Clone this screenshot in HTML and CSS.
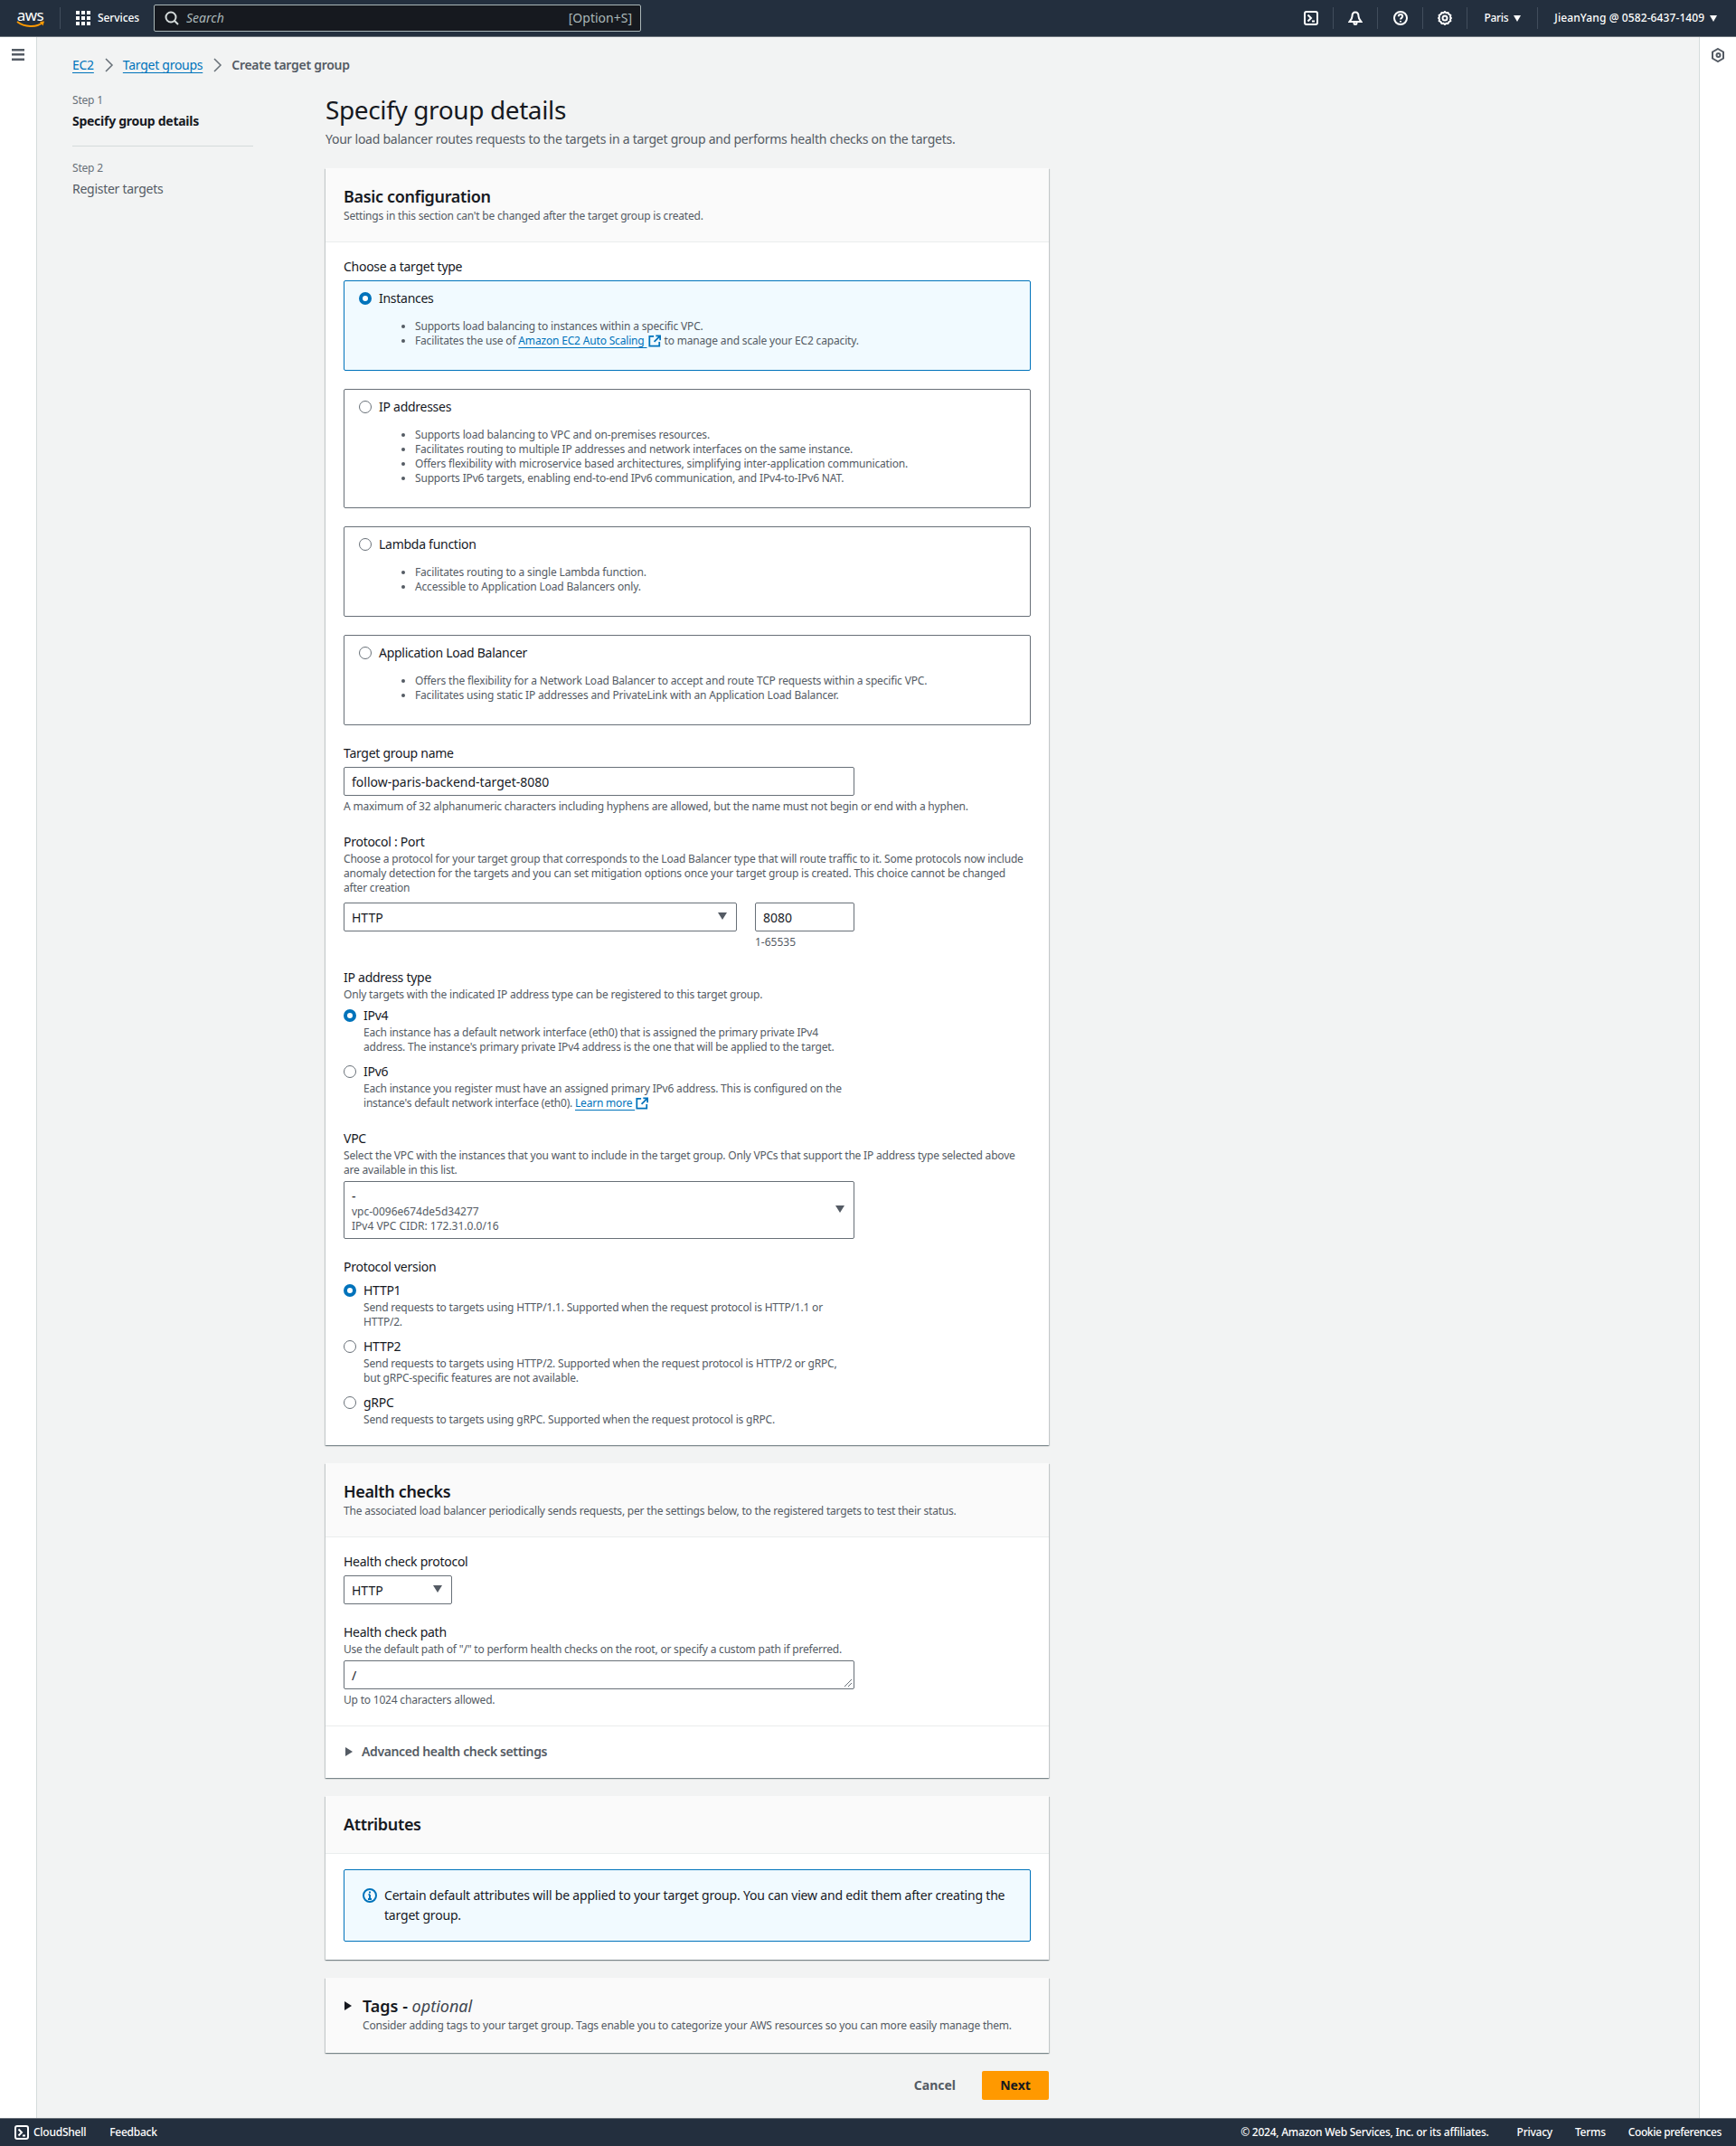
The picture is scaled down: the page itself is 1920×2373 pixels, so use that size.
FILE: index.html
```html
<!DOCTYPE html>
<html>
  <head>
    <meta charset="UTF-8" />
    <title>Create target group | EC2</title>
    <link rel="stylesheet" href="styles.css">
  </head>
  <body>
    <header class="topbar">
      <div class="logo">
        <span class="logo-text">aws</span>
        <svg class="logo-smile" width="32" height="8" viewBox="0 0 32 8"><path d="M1 1c8 6 21 7 28 1" fill="none" stroke="#f90" stroke-width="2"/><path d="M26 1l5-.5-1.500 5z" fill="#f90"/></svg>
      </div>
      <span class="divider logo-divider"></span>
      <svg class="grid-icon" width="16" height="16" viewBox="0 0 16 16" fill="#fff"><rect x="0" y="0" width="4" height="4"/><rect x="6" y="0" width="4" height="4"/><rect x="12" y="0" width="4" height="4"/><rect x="0" y="6" width="4" height="4"/><rect x="6" y="6" width="4" height="4"/><rect x="12" y="6" width="4" height="4"/><rect x="0" y="12" width="4" height="4"/><rect x="6" y="12" width="4" height="4"/><rect x="12" y="12" width="4" height="4"/></svg>
      <span class="services">Services</span>
      <div class="search">
        <svg width="16" height="16" viewBox="0 0 16 16" fill="none" stroke="#d5dbdb" stroke-width="2"><circle cx="7" cy="7" r="5.500"/><path d="M11 11l4 4"/></svg>
        <span class="search-text">Search</span>
        <span class="search-key">[Option+S]</span>
      </div>
      <div class="top-right">
        <svg class="top-icon" width="16" height="16" viewBox="0 0 16 16" fill="none" stroke="#fff" stroke-width="2"><rect x="1" y="1" width="14" height="14" rx="2"/><path d="M4.500 4.500L8 8l-3.500 3.500M9 11.500h3"/></svg>
        <span class="divider"></span>
        <svg class="top-icon" width="16" height="16" viewBox="0 0 16 16" fill="none" stroke="#fff" stroke-width="2"><path d="M8 1.500c-2.500 0-3.500 2-3.500 4.500 0 2.500-1.500 4-3 6h13c-1.500-2-3-3.500-3-6 0-2.500-1-4.500-3.500-4.500z"/><circle cx="8" cy="13.500" r="1.500"/></svg>
        <span class="divider"></span>
        <svg class="top-icon" width="16" height="16" viewBox="0 0 16 16" fill="none" stroke="#fff" stroke-width="2"><circle cx="8" cy="8" r="7"/><path d="M5.800 6.200C5.800 4.900 6.800 4 8 4s2.200.9 2.200 2.100c0 1.700-2.200 1.800-2.200 3.400"/><path d="M8 11v1.500"/></svg>
        <span class="divider"></span>
        <svg class="top-icon" width="16" height="16" viewBox="0 0 16 16" fill="none" stroke="#fff" stroke-width="2"><path d="M8 1l1.500 1.300 2-.3 1 1.800 1.800 1-.3 2L15 8l-1 1.200.3 2-1.800 1-1 1.800-2-.3L8 15l-1.500-1.300-2 .3-1-1.800-1.800-1 .3-2L1 8l1-1.200-.3-2 1.800-1 1-1.800 2 .3z"/><circle cx="8" cy="8" r="2.500"/></svg>
        <span class="divider"></span>
        <span class="menu menu-region">Paris<i class="caret white"></i></span>
        <span class="divider"></span>
        <span class="menu">JieanYang @ 0582-6437-1409<i class="caret white"></i></span>
      </div>
    </header>

    <div class="page">
      <aside class="rail rail-left">
        <svg width="14" height="13" viewBox="0 0 14 13" fill="#545b64"><rect width="14" height="2.500"/><rect y="5" width="14" height="2.500"/><rect y="10.500" width="14" height="2.500"/></svg>
      </aside>

      <main class="content">
        <nav class="breadcrumb">
          <a class="link">EC2</a>
          <svg class="crumb-sep" width="16" height="16" viewBox="0 0 16 16" fill="none" stroke="#687078" stroke-width="1.500"><path d="M5 1l7 7-7 7"/></svg>
          <a class="link">Target groups</a>
          <svg class="crumb-sep" width="16" height="16" viewBox="0 0 16 16" fill="none" stroke="#687078" stroke-width="1.500"><path d="M5 1l7 7-7 7"/></svg>
          <span class="crumb-current">Create target group</span>
        </nav>

        <div class="wizard">
          <ul class="steps">
            <li class="step step-active">
              <small>Step 1</small>
              <span>Specify group details</span>
            </li>
            <li class="step">
              <small>Step 2</small>
              <span>Register targets</span>
            </li>
          </ul>

          <div class="form-col">
            <h1>Specify group details</h1>
            <p class="lead">Your load balancer routes requests to the targets in a target group and performs health checks on the targets.</p>

            <section class="card">
              <div class="card-head">
                <h2>Basic configuration</h2>
                <p class="hint">Settings in this section can't be changed after the target group is created.</p>
              </div>
              <div class="card-body">
                <div class="label label-boxes">Choose a target type</div>

                <div class="choice choice-on">
                  <div class="choice-title"><span class="radio radio-on"></span>Instances</div>
                  <ul class="bullets">
                    <li>Supports load balancing to instances within a specific VPC.</li>
                    <li>Facilitates the use of <a class="link">Amazon EC2 Auto Scaling&nbsp;</a><svg class="ext" width="14" height="14" viewBox="0 0 16 16" fill="none" stroke="#0073bb" stroke-width="2"><path d="M7 2H1.500v12.500H14V9"/><path d="M9.500 1.500H15V7M15 1.500L7.500 9"/></svg> to manage and scale your EC2 capacity.</li>
                  </ul>
                </div>

                <div class="choice">
                  <div class="choice-title"><span class="radio"></span>IP addresses</div>
                  <ul class="bullets">
                    <li>Supports load balancing to VPC and on-premises resources.</li>
                    <li>Facilitates routing to multiple IP addresses and network interfaces on the same instance.</li>
                    <li>Offers flexibility with microservice based architectures, simplifying inter-application communication.</li>
                    <li>Supports IPv6 targets, enabling end-to-end IPv6 communication, and IPv4-to-IPv6 NAT.</li>
                  </ul>
                </div>

                <div class="choice">
                  <div class="choice-title"><span class="radio"></span>Lambda function</div>
                  <ul class="bullets">
                    <li>Facilitates routing to a single Lambda function.</li>
                    <li>Accessible to Application Load Balancers only.</li>
                  </ul>
                </div>

                <div class="choice choice-last">
                  <div class="choice-title"><span class="radio"></span>Application Load Balancer</div>
                  <ul class="bullets">
                    <li>Offers the flexibility for a Network Load Balancer to accept and route TCP requests within a specific VPC.</li>
                    <li>Facilitates using static IP addresses and PrivateLink with an Application Load Balancer.</li>
                  </ul>
                </div>

                <div class="field">
                  <div class="label">Target group name</div>
                  <div class="input input-wide">follow-paris-backend-target-8080</div>
                  <p class="hint hint-below">A maximum of 32 alphanumeric characters including hyphens are allowed, but the name must not begin or end with a hyphen.</p>
                </div>

                <div class="field">
                  <div class="label">Protocol : Port</div>
                  <p class="hint desc-select">Choose a protocol for your target group that corresponds to the Load Balancer type that will route traffic to it. Some protocols now include<br>anomaly detection for the targets and you can set mitigation options once your target group is created. This choice cannot be changed<br>after creation</p>
                  <div class="port-row">
                    <div class="input select select-protocol">HTTP<i class="caret"></i></div>
                    <div class="port-col">
                      <div class="input">8080</div>
                      <p class="hint hint-below hint-plain">1-65535</p>
                    </div>
                  </div>
                </div>

                <div class="field">
                  <div class="label">IP address type</div>
                  <p class="hint desc-vpc">Only targets with the indicated IP address type can be registered to this target group.</p>
                  <div class="radio-group">
                    <div class="radio-item">
                      <span class="radio radio-on"></span>
                      <div>
                        <div class="radio-label">IPv4</div>
                        <p class="hint">Each instance has a default network interface (eth0) that is assigned the primary private IPv4<br>address. The instance's primary private IPv4 address is the one that will be applied to the target.</p>
                      </div>
                    </div>
                    <div class="radio-item">
                      <span class="radio"></span>
                      <div>
                        <div class="radio-label">IPv6</div>
                        <p class="hint">Each instance you register must have an assigned primary IPv6 address. This is configured on the<br>instance's default network interface (eth0). <a class="link">Learn more&nbsp;</a><svg class="ext" width="14" height="14" viewBox="0 0 16 16" fill="none" stroke="#0073bb" stroke-width="2"><path d="M7 2H1.500v12.500H14V9"/><path d="M9.500 1.500H15V7M15 1.500L7.500 9"/></svg></p>
                      </div>
                    </div>
                  </div>
                </div>

                <div class="field">
                  <div class="label">VPC</div>
                  <p class="hint desc-vpc">Select the VPC with the instances that you want to include in the target group. Only VPCs that support the IP address type selected above<br>are available in this list.</p>
                  <div class="input select input-wide vpc-select">
                    <div>
                      <div class="vpc-name">-</div>
                      <div class="hint hint-plain">vpc-0096e674de5d34277</div>
                      <div class="hint hint-plain">IPv4 VPC CIDR: 172.31.0.0/16</div>
                    </div>
                    <i class="caret"></i>
                  </div>
                </div>

                <div class="field">
                  <div class="label">Protocol version</div>
                  <div class="radio-group radio-group-tight">
                    <div class="radio-item">
                      <span class="radio radio-on"></span>
                      <div>
                        <div class="radio-label">HTTP1</div>
                        <p class="hint">Send requests to targets using HTTP/1.1. Supported when the request protocol is HTTP/1.1 or<br>HTTP/2.</p>
                      </div>
                    </div>
                    <div class="radio-item">
                      <span class="radio"></span>
                      <div>
                        <div class="radio-label">HTTP2</div>
                        <p class="hint">Send requests to targets using HTTP/2. Supported when the request protocol is HTTP/2 or gRPC,<br>but gRPC-specific features are not available.</p>
                      </div>
                    </div>
                    <div class="radio-item">
                      <span class="radio"></span>
                      <div>
                        <div class="radio-label">gRPC</div>
                        <p class="hint">Send requests to targets using gRPC. Supported when the request protocol is gRPC.</p>
                      </div>
                    </div>
                  </div>
                </div>
              </div>
            </section>

            <section class="card">
              <div class="card-head">
                <h2>Health checks</h2>
                <p class="hint">The associated load balancer periodically sends requests, per the settings below, to the registered targets to test their status.</p>
              </div>
              <div class="card-body">
                <div class="label label-boxes">Health check protocol</div>
                <div class="input select select-small">HTTP<i class="caret"></i></div>
                <div class="field">
                  <div class="label">Health check path</div>
                  <p class="hint desc-vpc">Use the default path of "/" to perform health checks on the root, or specify a custom path if preferred.</p>
                  <div class="input input-wide textarea">/
                    <svg class="grip" width="10" height="10" viewBox="0 0 10 10" stroke="#687078" fill="none"><path d="M1 9l8-8M5 9l4-4"/></svg>
                  </div>
                  <p class="hint hint-below">Up to 1024 characters allowed.</p>
                </div>
              </div>
              <div class="expander">
                <i class="tri"></i>Advanced health check settings
              </div>
            </section>

            <section class="card">
              <div class="card-head attr-head">
                <h2>Attributes</h2>
              </div>
              <div class="card-body">
                <div class="info">
                  <svg width="16" height="16" viewBox="0 0 16 16" fill="none" stroke="#0073bb" stroke-width="2"><circle cx="8" cy="8" r="7"/><path d="M8 7v5M6 12h4M6.500 7H8M8 3.500v2"/></svg>
                  <p>Certain default attributes will be applied to your target group. You can view and edit them after creating the<br>target group.</p>
                </div>
              </div>
            </section>

            <section class="card">
              <div class="card-head tags-head">
                <i class="tri tri-dark"></i>
                <div>
                  <h2>Tags - <em>optional</em></h2>
                  <p class="hint">Consider adding tags to your target group. Tags enable you to categorize your AWS resources so you can more easily manage them.</p>
                </div>
              </div>
            </section>

            <div class="actions">
              <span class="btn-link">Cancel</span>
              <span class="btn-primary">Next</span>
            </div>
          </div>
        </div>
      </main>

      <aside class="rail rail-right">
        <svg width="14" height="16" viewBox="0 0 14 16" fill="none" stroke="#545b64" stroke-width="2"><path d="M7 1l6 3.500v7L7 15l-6-3.500v-7z"/><circle cx="7.500" cy="8" r="2"/></svg>
      </aside>
    </div>

    <footer class="footer">
      <svg class="top-icon" width="16" height="16" viewBox="0 0 16 16" fill="none" stroke="#fff" stroke-width="2"><rect x="1" y="1" width="14" height="14" rx="2"/><path d="M4.500 4.500L8 8l-3.500 3.500M9 11.500h3"/></svg>
      <span class="foot-shell">CloudShell</span>
      <span class="foot-feedback">Feedback</span>
      <div class="foot-right">
        <span class="foot-copy">© 2024, Amazon Web Services, Inc. or its affiliates.</span>
        <span>Privacy</span>
        <span>Terms</span>
        <span class="foot-cookie">Cookie preferences</span>
      </div>
    </footer>
  </body>
</html>
```

FILE: styles.css
```css
* {
  box-sizing: border-box;
  margin: 0;
  padding: 0;
}

body {
  font-family: "Noto Sans", Arial, sans-serif;
  font-size: 14px;
  line-height: 20px;
  letter-spacing: -0.27px;
  color: #16191f;
  background-color: #f2f3f3;
}

ul {
  list-style: none;
}

/* top bar */
.topbar {
  height: 41px;
  display: flex;
  align-items: center;
  padding-left: 18px;
  background-color: #232f3e;
  border-bottom: 1px solid #687078;
  color: #fff;
}

.logo {
  width: 31px;
  display: flex;
  flex-direction: column;
  align-items: center;
}

.logo-text {
  font-size: 17px;
  line-height: 13px;
  letter-spacing: -0.5px;
}

.logo-smile {
  display: block;
}

.divider {
  width: 1px;
  height: 24px;
  background-color: #414d5c;
}

.logo-divider {
  margin: 0 17px;
}

.services {
  width: 45px;
  margin-left: 8px;
  font-size: 12px;
  font-weight: 500;
  letter-spacing: -0.1px;
  white-space: nowrap;
}

.search {
  width: 539px;
  height: 30px;
  margin-left: 17px;
  padding: 0 9px 0 11px;
  display: flex;
  align-items: center;
  background-color: #16191f;
  border: 1px solid #aab7b8;
  border-radius: 2px;
  color: #aab7b8;
  letter-spacing: 0;
}

.search-text {
  margin-left: 8px;
  font-style: italic;
}

.search-key {
  margin-left: auto;
}

.top-right {
  margin-left: auto;
  padding-right: 19px;
  display: flex;
  align-items: center;
  gap: 16.25px;
}

.menu {
  margin: 0 1.75px;
  font-size: 12px;
  font-weight: 500;
  letter-spacing: 0.1px;
  display: flex;
  align-items: center;
}

.menu-region {
  letter-spacing: -0.3px;
}

.caret {
  display: block;
  width: 0;
  height: 0;
  margin-left: 6px;
  border-left: 4.5px solid transparent;
  border-right: 4.5px solid transparent;
  border-top: 7px solid #545b64;
}

.caret.white {
  border-top-color: #fff;
}

/* page frame */
.page {
  display: flex;
  height: 2301px;
}

.rail {
  width: 41px;
  flex: none;
  background-color: #fff;
  padding-top: 13px;
  display: flex;
  justify-content: center;
  align-items: flex-start;
}

.rail-left {
  border-right: 1px solid #d5dbdb;
}

.rail-right {
  border-left: 1px solid #d5dbdb;
  padding-top: 12px;
}

.content {
  flex: 1;
  padding: 21px 0 0 39px;
}

.breadcrumb {
  display: flex;
  align-items: center;
  height: 20px;
}

.link {
  color: #0073bb;
  text-decoration: underline;
  text-underline-offset: 3px;
}

.crumb-sep {
  margin: 0 8px;
}

.crumb-current {
  color: #545b64;
  font-weight: 600;
}

.wizard {
  display: grid;
  grid-template-columns: 200px 800px;
  column-gap: 80px;
  margin-top: 21px;
}

.step small {
  display: block;
  font-size: 12px;
  line-height: 16px;
  letter-spacing: -0.2px;
  color: #687078;
  margin-bottom: 5px;
}

.step span {
  display: block;
  color: #545b64;
}

.step-active {
  padding-bottom: 17px;
  margin-bottom: 16px;
  border-bottom: 1px solid #d5dbdb;
}

.step-active span {
  color: #16191f;
  font-weight: 700;
}

h1 {
  font-size: 28px;
  font-weight: 400;
  line-height: 36px;
  letter-spacing: -0.38px;
}

.lead {
  margin-top: 5px;
  margin-bottom: 22px;
  letter-spacing: -0.25px;
  color: #545b64;
}

/* cards */
.card {
  background-color: #fff;
  margin-bottom: 20px;
  box-shadow: 0 1px 1px 0 rgba(0, 28, 36, 0.3), 1px 1px 1px 0 rgba(0, 28, 36, 0.15), -1px 1px 1px 0 rgba(0, 28, 36, 0.15);
}

.card-head {
  padding: 20px;
  background-color: #fafafa;
  border-bottom: 1px solid #eaeded;
}

.attr-head {
  padding-bottom: 21px;
}

h2 {
  font-size: 18px;
  line-height: 22px;
  font-weight: 600;
  letter-spacing: -0.35px;
  margin-bottom: 3px;
}

.card-head h2:last-child {
  margin-bottom: 0;
}

h2 em {
  font-weight: 400;
  color: #414750;
}

.tags-head {
  display: flex;
  padding-bottom: 22px;
  border-bottom: none;
}

.tags-head h2 {
  letter-spacing: 0;
}

.hint {
  font-size: 12px;
  line-height: 16px;
  letter-spacing: -0.2px;
  color: #545b64;
}

.hint-plain {
  letter-spacing: 0;
}

.hint-below {
  margin-top: 4px;
}

.card-body {
  padding: 17px 20px 20px;
}

.label {
  line-height: 20px;
}

.label-boxes {
  margin-bottom: 5px;
}

/* target type boxes */
.choice {
  padding: 9px 20px 24px 16px;
  margin-bottom: 20px;
  border: 1px solid #687078;
  border-radius: 2px;
}

.choice-last {
  margin-bottom: 0;
}

.choice-on {
  background-color: #f1faff;
  border-color: #0073bb;
}

.choice-title {
  display: flex;
  align-items: center;
}

.choice-title .radio {
  margin-right: 8px;
}

.radio {
  display: block;
  flex: none;
  width: 14px;
  height: 14px;
  background-color: #fff;
  border: 1px solid #687078;
  border-radius: 50%;
}

.radio-on {
  border: 4.5px solid #0073bb;
}

.bullets {
  margin-top: 13px;
  margin-left: 62px;
  font-size: 12px;
  line-height: 16px;
  letter-spacing: -0.17px;
  color: #545b64;
}

.bullets li {
  list-style: disc;
}

.ext {
  vertical-align: -3px;
  margin: 0 1px;
}

/* fields */
.field {
  margin-top: 21px;
}

.input {
  width: 110px;
  height: 32px;
  padding: 1px 10px 0 8px;
  display: flex;
  align-items: center;
  background-color: #fff;
  border: 1px solid #687078;
  border-radius: 2px;
  letter-spacing: 0;
}

.input-wide {
  width: 565px;
  margin-top: 5px;
}

.select {
  justify-content: space-between;
}

.select .caret {
  margin-top: -3px;
  border-left-width: 5px;
  border-right-width: 5px;
  border-top-width: 8px;
}

.desc-select {
  margin-top: 1px;
  margin-bottom: 8px;
}

.desc-vpc {
  margin-top: 1px;
}

.port-row {
  display: flex;
  gap: 20px;
}

.select-protocol {
  width: 435px;
}

.select-small {
  width: 120px;
}

.radio-group {
  margin-top: 5px;
}

.radio-group-tight {
  margin-top: 6px;
}

.radio-item {
  display: flex;
  gap: 8px;
  margin-bottom: 9px;
}

.radio-item:last-child {
  margin-bottom: 0;
}

.radio-item .radio {
  margin-top: 3px;
}

.radio-label {
  margin-bottom: 1px;
}

.vpc-select {
  height: 64px;
  margin-top: 4px;
}

.vpc-name {
  line-height: 19px;
  margin-bottom: 0;
}

.textarea {
  position: relative;
  margin-top: 4px;
}

.grip {
  position: absolute;
  right: 1px;
  bottom: 1px;
}

.expander {
  height: 58px;
  padding: 18px 0 0 22px;
  display: flex;
  border-top: 1px solid #eaeded;
  color: #545b64;
  font-weight: 600;
  letter-spacing: -0.37px;
}

.tri {
  display: block;
  width: 0;
  height: 0;
  margin: 5px 10px 0 0;
  border-top: 5px solid transparent;
  border-bottom: 5px solid transparent;
  border-left: 8px solid #545b64;
}

.tri-dark {
  margin: 6px 12px 0 1px;
  border-left-color: #16191f;
}

.info {
  display: flex;
  gap: 8px;
  padding: 17px 20px 17px;
  line-height: 22px;
  letter-spacing: -0.19px;
  background-color: #f1faff;
  border: 1px solid #0073bb;
  border-radius: 2px;
}

.info svg {
  flex: none;
  margin-top: 3px;
}

/* bottom actions */
.actions {
  display: flex;
  justify-content: flex-end;
  align-items: center;
  gap: 29px;
  height: 32px;
  margin-top: 20px;
  letter-spacing: 0;
}

.btn-link {
  color: #545b64;
  font-weight: 700;
}

.btn-primary {
  width: 74px;
  height: 32px;
  line-height: 32px;
  text-align: center;
  font-weight: 700;
  background-color: #ff9900;
  border-radius: 2px;
}

.footer {
  height: 31px;
  padding: 0 16px;
  display: flex;
  align-items: center;
  background-color: #232f3e;
  border-top: 1px solid #687078;
  color: #fff;
  font-size: 12px;
  font-weight: 500;
  letter-spacing: -0.25px;
}

.foot-shell {
  margin-left: 5px;
}

.foot-feedback {
  margin-left: 26px;
}

.foot-right {
  margin-left: auto;
  display: flex;
  gap: 25px;
}

.foot-copy {
  margin-right: 6px;
}

.foot-cookie {
  letter-spacing: -0.4px;
}
```
